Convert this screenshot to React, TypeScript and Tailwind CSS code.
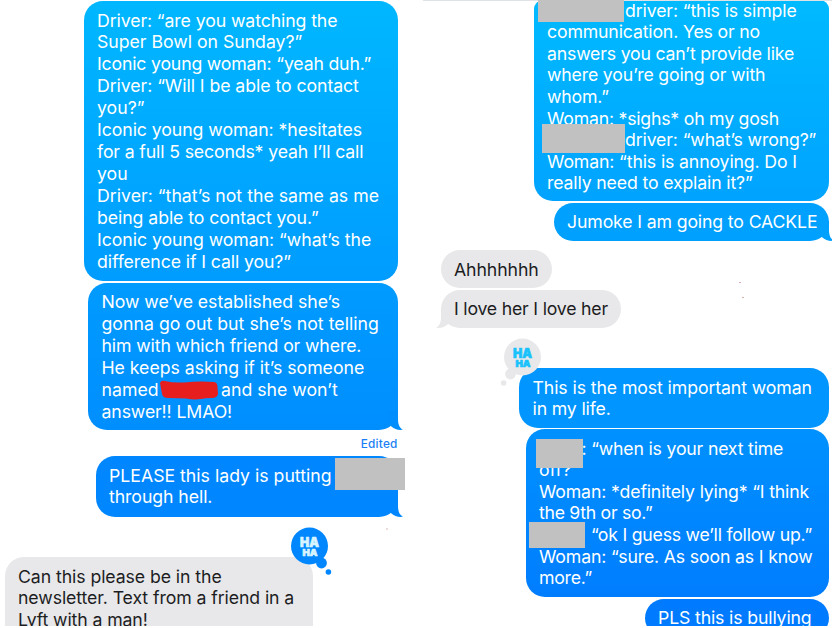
import type { ReactNode } from "react";

/* text, letter spacing in px, left indent in px */
type LineData = [ReactNode, number, number?];

function Lines({ lines, height }: { lines: LineData[]; height: number }) {
  return (
    <>
      {lines.map(([text, tracking, indent = 0], i) => (
        <div
          key={i}
          className="whitespace-pre"
          style={{ height, lineHeight: `${height}px`, paddingLeft: indent, letterSpacing: tracking }}
        >
          {text}
        </div>
      ))}
    </>
  );
}

function Bubble({ className, children }: { className: string; children: ReactNode }) {
  return <div className={`relative shrink-0 rounded-[19px] px-[13.5px] pt-[8.5px] ${className}`}>{children}</div>;
}

function Tail({ className, flip }: { className: string; flip?: boolean }) {
  return (
    <svg
      viewBox="0 0 16 20"
      className={`absolute bottom-0 h-5 w-4 ${flip ? "-left-[5px] -scale-x-100" : "-right-[5px]"} ${className}`}
      fill="currentColor"
    >
      <path d="M0 0H11V9C11 14.500 12.500 18 16 19.600C12 20.500 7.500 19.200 3.800 16Z" />
    </svg>
  );
}

function Redaction({ className }: { className: string }) {
  return <div className={`absolute z-10 bg-[#c1c1c1] ${className}`} />;
}

function Haha({ className, bubble, ink, flip }: { className: string; bubble: string; ink: string; flip?: boolean }) {
  return (
    <svg viewBox="0 0 44 48" className={`absolute z-10 h-12 w-11 ${className}`}>
      <g fill={bubble} transform={flip ? "translate(44 0) scale(-1 1)" : undefined}>
        <circle cx="19.500" cy="19" r="18.500" />
        <circle cx="31.500" cy="36" r="5.400" />
        <circle cx="38.400" cy="45" r="2.800" />
      </g>
      <g
        fill={ink}
        stroke={ink}
        strokeWidth="0.7"
        strokeLinejoin="round"
        fontFamily="Inter, sans-serif"
        fontWeight="900"
        textAnchor="middle"
      >
        <text x={flip ? 24.5 : 19.5} y="20.300" fontSize="13" textLength="19" lengthAdjust="spacingAndGlyphs">HA</text>
        <text x={flip ? 25 : 20} y="29.200" fontSize="9" textLength="15" lengthAdjust="spacingAndGlyphs">HA</text>
      </g>
    </svg>
  );
}

export default function App() {
  return (
    <div className="h-[628px] w-[832px] overflow-hidden bg-white font-[Inter,'Liberation_Sans',sans-serif] text-[17.7px]">
      <div className="flex h-[626px] overflow-hidden">
        <section className="relative flex w-[423px] flex-col pt-px">
          <div className="flex shrink-0 flex-col items-end gap-[1.5px] pr-[25.5px] text-white">
            <Bubble className="h-[280px] w-[314px] bg-linear-to-b from-[#00b7ff] to-[#009cff]">
              <Lines
                height={21.95}
                lines={[
                  ["Driver: “are you watching the", -0.1],
                  ["Super Bowl on Sunday?”", -0.02],
                  ["Iconic young woman: “yeah duh.”", -0.18],
                  ["Driver: “Will I be able to contact", -0.06],
                  ["you?”", 0],
                  ["Iconic young woman: *hesitates", -0.07],
                  ["for a full 5 seconds* yeah I’ll call", -0.14],
                  ["you", 0],
                  ["Driver: “that’s not the same as me", 0.02],
                  ["being able to contact you.”", -0.07],
                  ["Iconic young woman: “what’s the", -0.04],
                  ["difference if I call you?”", -0.1],
                ]}
              />
            </Bubble>
            <Bubble className="h-[147.500px] w-[309.5px] bg-linear-to-b from-[#009bff] to-[#008eff]">
              <Lines
                height={21.95}
                lines={[
                  ["Now we’ve established she’s", -0.05],
                  ["gonna go out but she’s not telling", 0.02],
                  ["him with which friend or where.", -0.12],
                  ["He keeps asking if it’s someone", -0.03],
                  [<>named<span className="inline-block w-[62.5px]" />and she won’t</>, 0],
                  ["answer!! LMAO!", -0.12],
                ]}
              />
              <svg viewBox="0 0 60 20" className="absolute top-[97px] left-[71px] h-5 w-[60px]" fill="#e61e1e">
                <path d="M1 3Q2 0 6 1Q14 3 25 2.500Q40 1 55 2Q58.500 2.500 58.500 7L59 14Q58 18 53 18Q46 18 42 19Q35 20 27 18.500L9 18Q4 18 3 14Z" />
              </svg>
              <Tail className="text-[#008eff]" />
            </Bubble>
            <div className="mt-1 h-[19px] text-[11.8px] leading-4 font-medium tracking-[0.2px] text-[#1c7ff5]">Edited</div>
            <Bubble className="h-[60.500px] w-[302px] bg-[#0087ff]">
              <Lines height={21.95} lines={[["PLEASE this lady is putting", 0], ["through hell.", -0.08]]} />
              <Redaction className="top-[2px] left-[239.5px] h-[31.5px] w-[69.5px]" />
              <Tail className="text-[#0087ff]" />
            </Bubble>
          </div>
          <div className="flex shrink-0 flex-col pt-[40.5px] pl-[4.500px] text-[#1d1d1f]">
            <Bubble className="h-24 w-[308px] bg-[#e8e8ea]">
              <Lines
                height={21.95}
                lines={[
                  ["Can this please be in the", -0.08],
                  ["newsletter. Text from a friend in a", -0.09],
                  ["Lyft with a man!", -0.12],
                ]}
              />
              <Haha className="-top-[30px] left-[285.5px]" bubble="#0087ff" ink="#d8f4ff" />
            </Bubble>
          </div>
          <i className="absolute top-[528px] left-[386px] size-[2px] rounded-full bg-[#e3cfcb]" />
        </section>

        <section className="relative flex w-[409px] flex-col">
          <div className="flex shrink-0 flex-col items-end gap-[1.5px] pr-[3px] text-white">
            <div className="relative h-[201px] w-[295.5px] rounded-t-[9px] rounded-b-[19px] bg-linear-to-b from-[#00baff] to-[#00a3ff] px-[13.5px]">
              <div className="-mt-[0.5px]">
                <Lines
                  height={21.62}
                  lines={[
                    ["driver: “this is simple", -0.12, 78],
                    ["communication. Yes or no", -0.16],
                    ["answers you can’t provide like", -0.19],
                    ["where you’re going or with", -0.18],
                    ["whom.”", -0.2],
                    ["Woman: *sighs* oh my gosh", -0.22],
                    ["driver: “what’s wrong?”", -0.13, 78],
                    ["Woman: “this is annoying. Do I", -0.14],
                    ["really need to explain it?”", -0.15],
                  ]}
                />
              </div>
              <Redaction className="top-0 left-[4.500px] h-[21.500px] w-[86px]" />
              <Redaction className="top-[123.5px] left-[8px] h-[29.5px] w-[83.5px]" />
            </div>
            <Bubble className="h-[38px] w-[275.5px] bg-[#00a0ff]">
              <Lines height={21.62} lines={[["Jumoke I am going to CACKLE", -0.14]]} />
              <Tail className="text-[#00a0ff]" />
            </Bubble>
          </div>
          <div className="flex shrink-0 flex-col gap-[1.5px] pt-[9.5px] pl-[17.5px] text-[#1d1d1f]">
            <Bubble className="h-[38px] w-[111.5px] bg-[#e8e8ea]">
              <Lines height={21.62} lines={[["Ahhhhhhh", -0.1]]} />
            </Bubble>
            <Bubble className="h-[38px] w-[180px] bg-[#e8e8ea]">
              <Lines height={21.62} lines={[["I love her I love her", -0.2]]} />
              <Tail flip className="text-[#e8e8ea]" />
            </Bubble>
          </div>
          <div className="flex shrink-0 flex-col items-end gap-[1.5px] pt-[40.5px] pr-[3px] text-white">
            <Bubble className="h-[59.5px] w-[310px] bg-[#0095ff]">
              <Lines height={21.62} lines={[["This is the most important woman", -0.1], ["in my life.", -0.15]]} />
              <Haha flip className="-top-[30px] -left-[21.500px]" bubble="#e8e8ea" ink="#19c2fb" />
            </Bubble>
            <Bubble className="h-[168px] w-[303.5px] bg-linear-to-b from-[#0091ff] to-[#007dff]">
              <Lines
                height={21.62}
                lines={[
                  [": “when is your next time", -0.19, 42.5],
                  ["off?”", 0],
                  ["Woman: *definitely lying* “I think", -0.17],
                  ["the 9th or so.”", -0.3],
                  ["“ok I guess we’ll follow up.”", -0.23, 52],
                  ["Woman: “sure. As soon as I know", -0.16],
                  ["more.”", -0.25],
                ]}
              />
              <Redaction className="top-[9.5px] left-[10.5px] h-[29.5px] w-[47px]" />
              <Redaction className="top-[92.5px] left-[3px] h-[26.5px] w-[56.5px]" />
            </Bubble>
            <Bubble className="h-[38px] w-[184.5px] bg-[#007aff]">
              <Lines height={21.62} lines={[["PLS this is bullying", -0.15]]} />
            </Bubble>
          </div>
          <i className="absolute top-[282px] left-[316px] h-px w-[2px] bg-[#d9aeb2]" />
          <i className="absolute top-[297px] left-[319px] h-px w-[2px] bg-[#d3b3a6]" />
          <i className="absolute top-0 left-0 h-px w-full bg-[#dfe3e5]" />
        </section>
      </div>
    </div>
  );
}
